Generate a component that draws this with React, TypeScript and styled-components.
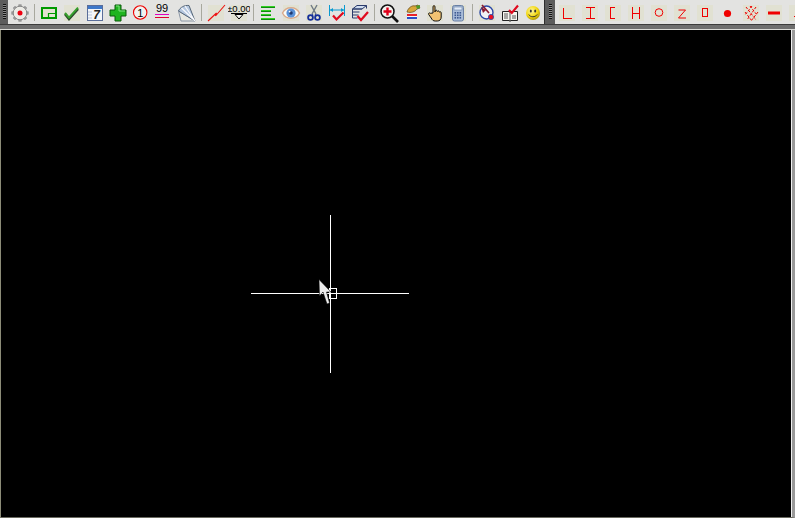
import React from "react";
import styled, { createGlobalStyle } from "styled-components";

const Global = createGlobalStyle`
  html, body { margin: 0; padding: 0; background: #000; }
  #root { width: 795px; height: 518px; }
`;

const Page = styled.div`
  width: 795px;
  height: 518px;
  display: flex;
  flex-direction: column;
  overflow: hidden;
  background: #000;
`;

const Toolbar = styled.div`
  height: 24px;
  flex: none;
  display: flex;
  background: #e3e3e1;
  overflow: hidden;
`;

const Grip = styled.div<{ $wide?: boolean }>`
  flex: none;
  width: ${(p) => (p.$wide ? 11 : 8)}px;
  box-sizing: border-box;
  background-color: #5c5c5c;
  border-left: ${(p) => (p.$wide ? "1px solid #2e2e2e" : "none")};
  display: flex;
  justify-content: center;
  padding: 4px 0 5px;
`;

const GripDots = styled.div`
  width: 3px;
  background-image: repeating-linear-gradient(
    to bottom,
    #111 0,
    #111 1px,
    #8a8a8a 1px,
    #8a8a8a 2px
  );
`;

const Btn = styled.div`
  flex: none;
  width: 23px;
  height: 24px;
  padding-top: 2px;
  box-sizing: border-box;
  display: flex;
  justify-content: center;
  align-items: flex-start;
  svg { display: block; }
`;

const Sep = styled.div`
  flex: none;
  width: 6px;
  display: flex;
  justify-content: center;
  padding: 4px 0 3px;
  &::before {
    content: "";
    width: 1px;
    background: #a8a89e;
  }
`;

const Band = styled.div`
  flex: none;
  height: 5px;
  box-sizing: border-box;
  background: #6f6f6f;
  border-top: 1px solid #3c3c3c;
`;

const Rule = styled.div`
  flex: none;
  height: 1px;
  background: #dcdcd8;
`;

const Canvas = styled.div`
  flex: 1;
  position: relative;
  background: #000;
  border-left: 1px solid #8c8c78;
  border-right: 3px solid #9a9a9a;
  border-bottom: 1px solid #6a6a60;
  box-shadow: inset -1px 0 0 #f0f0f0;
`;

const CursorArt = styled.svg`
  position: absolute;
  left: 249px;
  top: 184px;
`;

const Ico: React.FC<{ children: React.ReactNode; plain?: boolean }> = ({ children, plain }) => (
  <svg width="22" height="22" viewBox="0 0 22 22">
    {!plain && <rect x="3" y="3" width="16" height="16" fill="#e1e1d2" />}
    {children}
  </svg>
);

const sans = "Liberation Sans, Arial, sans-serif";

const gearTeeth = Array.from({ length: 8 }, (_, i) => i * 45);

const Gear = () => (
  <Ico plain>
    {gearTeeth.map((a) => (
      <rect key={a} x="9.5" y="2.5" width="3" height="17" fill="#9a9a9a" transform={`rotate(${a} 11 11)`} />
    ))}
    <circle cx="11" cy="11" r="6.8" fill="#ecebe6" stroke="#858585" strokeWidth="1" />
    <circle cx="11" cy="11" r="2.5" fill="#ee0010" />
  </Ico>
);

const GreenRect = () => (
  <Ico plain>
    <rect x="3" y="5" width="16" height="12" fill="#009a00" />
    <rect x="5" y="7" width="12" height="8" fill="#e3e3d2" />
    <path d="M10.5 15v-3.5H17" fill="none" stroke="#009a00" strokeWidth="1.2" />
  </Ico>
);

const Check = () => (
  <Ico>
    <path d="M4 12l4 5 9-10" fill="none" stroke="#2b4a2b" strokeWidth="2.6" />
    <path d="M4 11l4 4.6 9-10" fill="none" stroke="#35a02c" strokeWidth="2" />
  </Ico>
);

const Calendar = () => (
  <Ico plain>
    <rect x="3.5" y="3.5" width="15" height="15" fill="#f4f6fa" stroke="#5a6d9a" />
    <rect x="4" y="4" width="14" height="3" fill="#3f78c9" />
    <path d="M4 10h4M4 13h4M4 16h4" stroke="#b9c6dc" strokeWidth="1" />
    <text x="12.5" y="16.5" fontFamily={sans} fontSize="12" fontWeight="700" fontStyle="italic" textAnchor="middle" fill="#222">
      7
    </text>
  </Ico>
);

const Plus = () => (
  <Ico plain>
    <path d="M8 3h6v5h5v6h-5v5H8v-5H3V8h5z" fill="#1fb41f" stroke="#0a5a0a" strokeWidth="1" />
    <path d="M9 4h3v5h6" fill="none" stroke="#7fe07f" strokeWidth="1" />
  </Ico>
);

const Circle1 = () => (
  <Ico plain>
    <circle cx="10.2" cy="10.5" r="6.7" fill="#f2f2f0" stroke="#ee0000" strokeWidth="1.1" />
    <text x="10.2" y="14.5" fontFamily={sans} fontSize="11" textAnchor="middle" fill="#000">
      1
    </text>
  </Ico>
);

const Ninety = () => (
  <Ico plain>
    <text x="9" y="10" fontFamily={sans} fontSize="11" textAnchor="middle" fill="#000">
      99
    </text>
    <rect x="2" y="12" width="14" height="1" fill="#e000c0" />
    <rect x="2" y="15" width="14" height="1" fill="#e00030" />
  </Ico>
);

const Fan = () => (
  <Ico plain>
    <path d="M19 19H5L2.5 9z" fill="#e8e8e2" stroke="#8a96a6" strokeWidth="1" />
    <path d="M19 19L2.5 9C4 5.5 8 3 13 3.5z" fill="#b6c8e0" stroke="#566678" strokeWidth="1" />
    <path d="M19 19L5.5 6M19 19L9 4" stroke="#f8f9fc" strokeWidth="1.2" />
  </Ico>
);

const RedJog = () => (
  <Ico>
    <path d="M3 19l8.5-8-1 3L20 3" fill="none" stroke="#ee1010" strokeWidth="1.1" />
  </Ico>
);

const PlusZero = () => (
  <Ico>
    <text x="11" y="9.5" fontFamily={sans} fontSize="9.5" textAnchor="middle" fill="#000">
      ±0.00
    </text>
    <rect x="3" y="11" width="16" height="1" fill="#000" />
    <path d="M7 12.5h8l-4 4.5z" fill="#f5f5f0" stroke="#000" strokeWidth="1" />
  </Ico>
);

const Bars = () => (
  <Ico plain>
    {[
      [4, 14],
      [8, 10],
      [12, 10],
      [16, 14],
    ].map(([y, w]) => (
      <g key={y}>
        <rect x="4" y={y} width={w} height="1" fill="#30d020" />
        <rect x="4" y={y + 1} width={w} height="1" fill="#108a10" />
      </g>
    ))}
  </Ico>
);

const Eye = () => (
  <Ico>
    <path d="M2.5 11C6 4 16 4 19.5 11 16 18 6 18 2.5 11z" fill="#fbfbf6" stroke="#d9a98a" strokeWidth="1.4" />
    <circle cx="11" cy="11" r="4.6" fill="#5c93d8" />
    <circle cx="11" cy="11" r="1.8" fill="#20386e" />
    <circle cx="9.6" cy="9.6" r="0.9" fill="#fff" />
  </Ico>
);

const Scissors = () => (
  <Ico>
    <path d="M8 3l5 9M14 3l-5 9" stroke="#6f7a86" strokeWidth="1.4" fill="none" />
    <circle cx="7.5" cy="15.5" r="2.4" fill="none" stroke="#16309a" strokeWidth="1.8" />
    <circle cx="14.5" cy="15.5" r="2.4" fill="none" stroke="#16309a" strokeWidth="1.8" />
    <path d="M9 12.5l1 1M13 12.5l-1 1" stroke="#16309a" strokeWidth="1.4" />
  </Ico>
);

const Dim = () => (
  <Ico plain>
    <path d="M3.5 3v11M18.5 3v11M4 8h14" stroke="#0a9ad0" strokeWidth="1" fill="none" />
    <path d="M4 8l3-2v4zM18 8l-3-2v4z" fill="#0a9ad0" />
    <path d="M7 13.5l3.5 4 7-7" stroke="#e00a1e" strokeWidth="2.2" fill="none" />
  </Ico>
);

const Stack = () => (
  <Ico plain>
    <path d="M3.5 7L8 3.5h9.5L13 7z" fill="#cfdcf0" stroke="#2a3a6a" strokeWidth="1" />
    <path d="M3.5 7h9.5M3.5 10h7M3.5 13h6M17.5 3.5v3" stroke="#2a3a6a" strokeWidth="1" fill="none" />
    <path d="M3.5 7v9h5" stroke="#2a3a6a" strokeWidth="1" fill="none" />
    <path d="M8.5 14l3.5 4 7-8" stroke="#e00a1e" strokeWidth="2.2" fill="none" />
  </Ico>
);

const ZoomIcon = () => (
  <Ico plain>
    <path d="M14 14l6 6" stroke="#111" strokeWidth="2.6" />
    <circle cx="9.5" cy="9.5" r="6.5" fill="#f3f3f0" stroke="#111" strokeWidth="1.5" />
    <path d="M9.5 5.5v8M5.5 9.5h8" stroke="#e0001a" strokeWidth="2.4" />
  </Ico>
);

const Layer = () => (
  <Ico plain>
    <path d="M6 10C7 6 11 3 14 4l3-1 2 3-3 1c-2 3-6 4-10 3z" fill="#d9a63a" stroke="#6a5020" strokeWidth="0.8" />
    <path d="M15 4l4-1v3l-3 1z" fill="#4a9a2a" />
    <rect x="6" y="12" width="10" height="2" fill="#e8222a" />
    <rect x="6" y="14" width="10" height="1" fill="#f6f6f6" />
    <rect x="6" y="15" width="10" height="2" fill="#2a4ec8" />
  </Ico>
);

const Hand = () => (
  <Ico>
    <path
      d="M9 11V4.8c0-1.6 2-1.6 2 0V10l.2-1c.4-1.2 2-1 2 .2l.2.3c.4-1 1.9-.8 1.9.4l.2.3c.4-.8 1.7-.5 1.7.5V15c0 2.5-1.5 4-4 4h-2c-2 0-3-1-4-3l-2.5-3.5c-.7-1.2.7-2.2 1.7-1.2z"
      fill="#f2c272"
      stroke="#111"
      strokeWidth="1"
    />
  </Ico>
);

const Calc = () => (
  <Ico>
    <rect x="5.5" y="3.5" width="11" height="15.5" rx="2" fill="#a8bcd8" stroke="#6a80a4" />
    <rect x="7" y="5" width="8" height="3" fill="#e3ecf8" stroke="#6a80a4" strokeWidth="0.6" />
    {[10, 12.5, 15].map((y) =>
      [7.5, 10, 12.5].map((x) => <rect key={`${x}-${y}`} x={x} y={y} width="1.6" height="1.6" fill="#3e5a90" />)
    )}
  </Ico>
);

const Orbit = () => (
  <Ico>
    <circle cx="10.5" cy="10.5" r="6.5" fill="#f1f1f4" stroke="#2a48a8" strokeWidth="1.4" />
    <path d="M6 3l7 8" stroke="#8a1a30" strokeWidth="1.6" />
    <path d="M5 5l2 6 3-3z" fill="#8a1a30" />
    <circle cx="15" cy="15" r="2.6" fill="#ee1020" stroke="#2a48a8" strokeWidth="0.8" />
  </Ico>
);

const Book = () => (
  <Ico plain>
    <path d="M3.5 9.5h7l.5 1 .5-1h7v9h-7l-.5 1-.5-1h-7z" fill="#f6f6f0" stroke="#222" strokeWidth="1" />
    <path d="M11 10.5v8M5 12h4M5 14h4M5 16h4M13 14h4M13 16h4" stroke="#333" strokeWidth="0.8" />
    <path d="M10 8l2.8 3L19 3.5" stroke="#e00a1e" strokeWidth="2.1" fill="none" />
  </Ico>
);

const Smile = () => (
  <Ico plain>
    <defs>
      <radialGradient id="sm" cx="40%" cy="35%" r="70%">
        <stop offset="0" stopColor="#fff7a0" />
        <stop offset="0.6" stopColor="#f3d812" />
        <stop offset="1" stopColor="#a89000" />
      </radialGradient>
    </defs>
    <circle cx="11" cy="11" r="7" fill="url(#sm)" />
    <ellipse cx="8.8" cy="9" rx="1" ry="1.5" fill="#333" />
    <ellipse cx="13.2" cy="9" rx="1" ry="1.5" fill="#333" />
    <path d="M6.8 12.5c1.5 3 6.5 3 8.4 0" fill="none" stroke="#333" strokeWidth="1" />
  </Ico>
);

const red = { fill: "none", stroke: "#f00000", strokeWidth: 1, shapeRendering: "crispEdges" as const };

const DL = () => (
  <Ico>
    <path d="M7 5.5v11h9" {...red} />
  </Ico>
);
const DI = () => (
  <Ico>
    <path d="M11.5 5.5v11M7 5.5h9M7 16.5h9" {...red} />
  </Ico>
);
const DC = () => (
  <Ico>
    <path d="M13 5.5H8.5v11H13" {...red} />
  </Ico>
);
const DH = () => (
  <Ico>
    <path d="M7.5 5v12M14 5v12M7.5 11h6.5" {...red} />
  </Ico>
);
const DO = () => (
  <Ico>
    <circle cx="11" cy="10.5" r="3.8" fill="none" stroke="#f00000" />
  </Ico>
);
const DZ = () => (
  <Ico>
    <path d="M7.5 8h7L7.5 16h7.5" fill="none" stroke="#f00000" />
  </Ico>
);
const DR = () => (
  <Ico>
    <rect x="8.5" y="6.5" width="5" height="8" {...red} />
  </Ico>
);
const DDot = () => (
  <Ico plain>
    <circle cx="10.5" cy="11.5" r="3.6" fill="#f00000" />
  </Ico>
);
const DHatch = () => (
  <Ico>
    <path
      d="M6 5l10 13M10 4l7 9M5 10l7 9M16 5L7 18M12 4L5 13M18 10l-7 9"
      fill="none"
      stroke="#f00000"
      strokeWidth="1"
      strokeDasharray="2.5 1.5"
    />
  </Ico>
);
const DMinus = () => (
  <Ico>
    <rect x="5" y="9.5" width="12" height="3" fill="#f00000" />
  </Ico>
);
const DLow = () => (
  <Ico>
    <rect x="8" y="14" width="14" height="1" fill="#f00000" />
  </Ico>
);

type Part = React.FC | "sep";

const mainTools: Part[] = [
  Gear, "sep",
  GreenRect, Check, Calendar, Plus, Circle1, Ninety, Fan, "sep",
  RedJog, PlusZero, "sep",
  Bars, Eye, Scissors, Dim, Stack, "sep",
  ZoomIcon, Layer, Hand, Calc, "sep",
  Orbit, Book, Smile,
];

const drawTools: Part[] = [DL, DI, DC, DH, DO, DZ, DR, DDot, DHatch, DMinus, DLow];

const renderParts = (parts: Part[]) =>
  parts.map((P, i) =>
    P === "sep" ? (
      <Sep key={i} />
    ) : (
      <Btn key={i}>
        <P />
      </Btn>
    )
  );

export default function App() {
  return (
    <Page>
      <Global />
      <Toolbar>
        <Grip>
          <GripDots />
        </Grip>
        {renderParts(mainTools)}
        <Grip $wide>
          <GripDots />
        </Grip>
        {renderParts(drawTools)}
      </Toolbar>
      <Band />
      <Rule />
      <Canvas>
        <CursorArt width="162" height="162" viewBox="0 0 162 162">
          <g shapeRendering="crispEdges" fill="none" stroke="#fff" strokeWidth="1">
            <path d="M80.5 1v158M1 79.5h158" />
            <rect x="79.5" y="74.5" width="7" height="10" />
          </g>
          <path d="M69 65.5l.5 16.5 3.5-4 4 12 2.5-1-3-11 4.5 0z" fill="#ececec" stroke="#000" strokeWidth="0.5" />
        </CursorArt>
      </Canvas>
    </Page>
  );
}
